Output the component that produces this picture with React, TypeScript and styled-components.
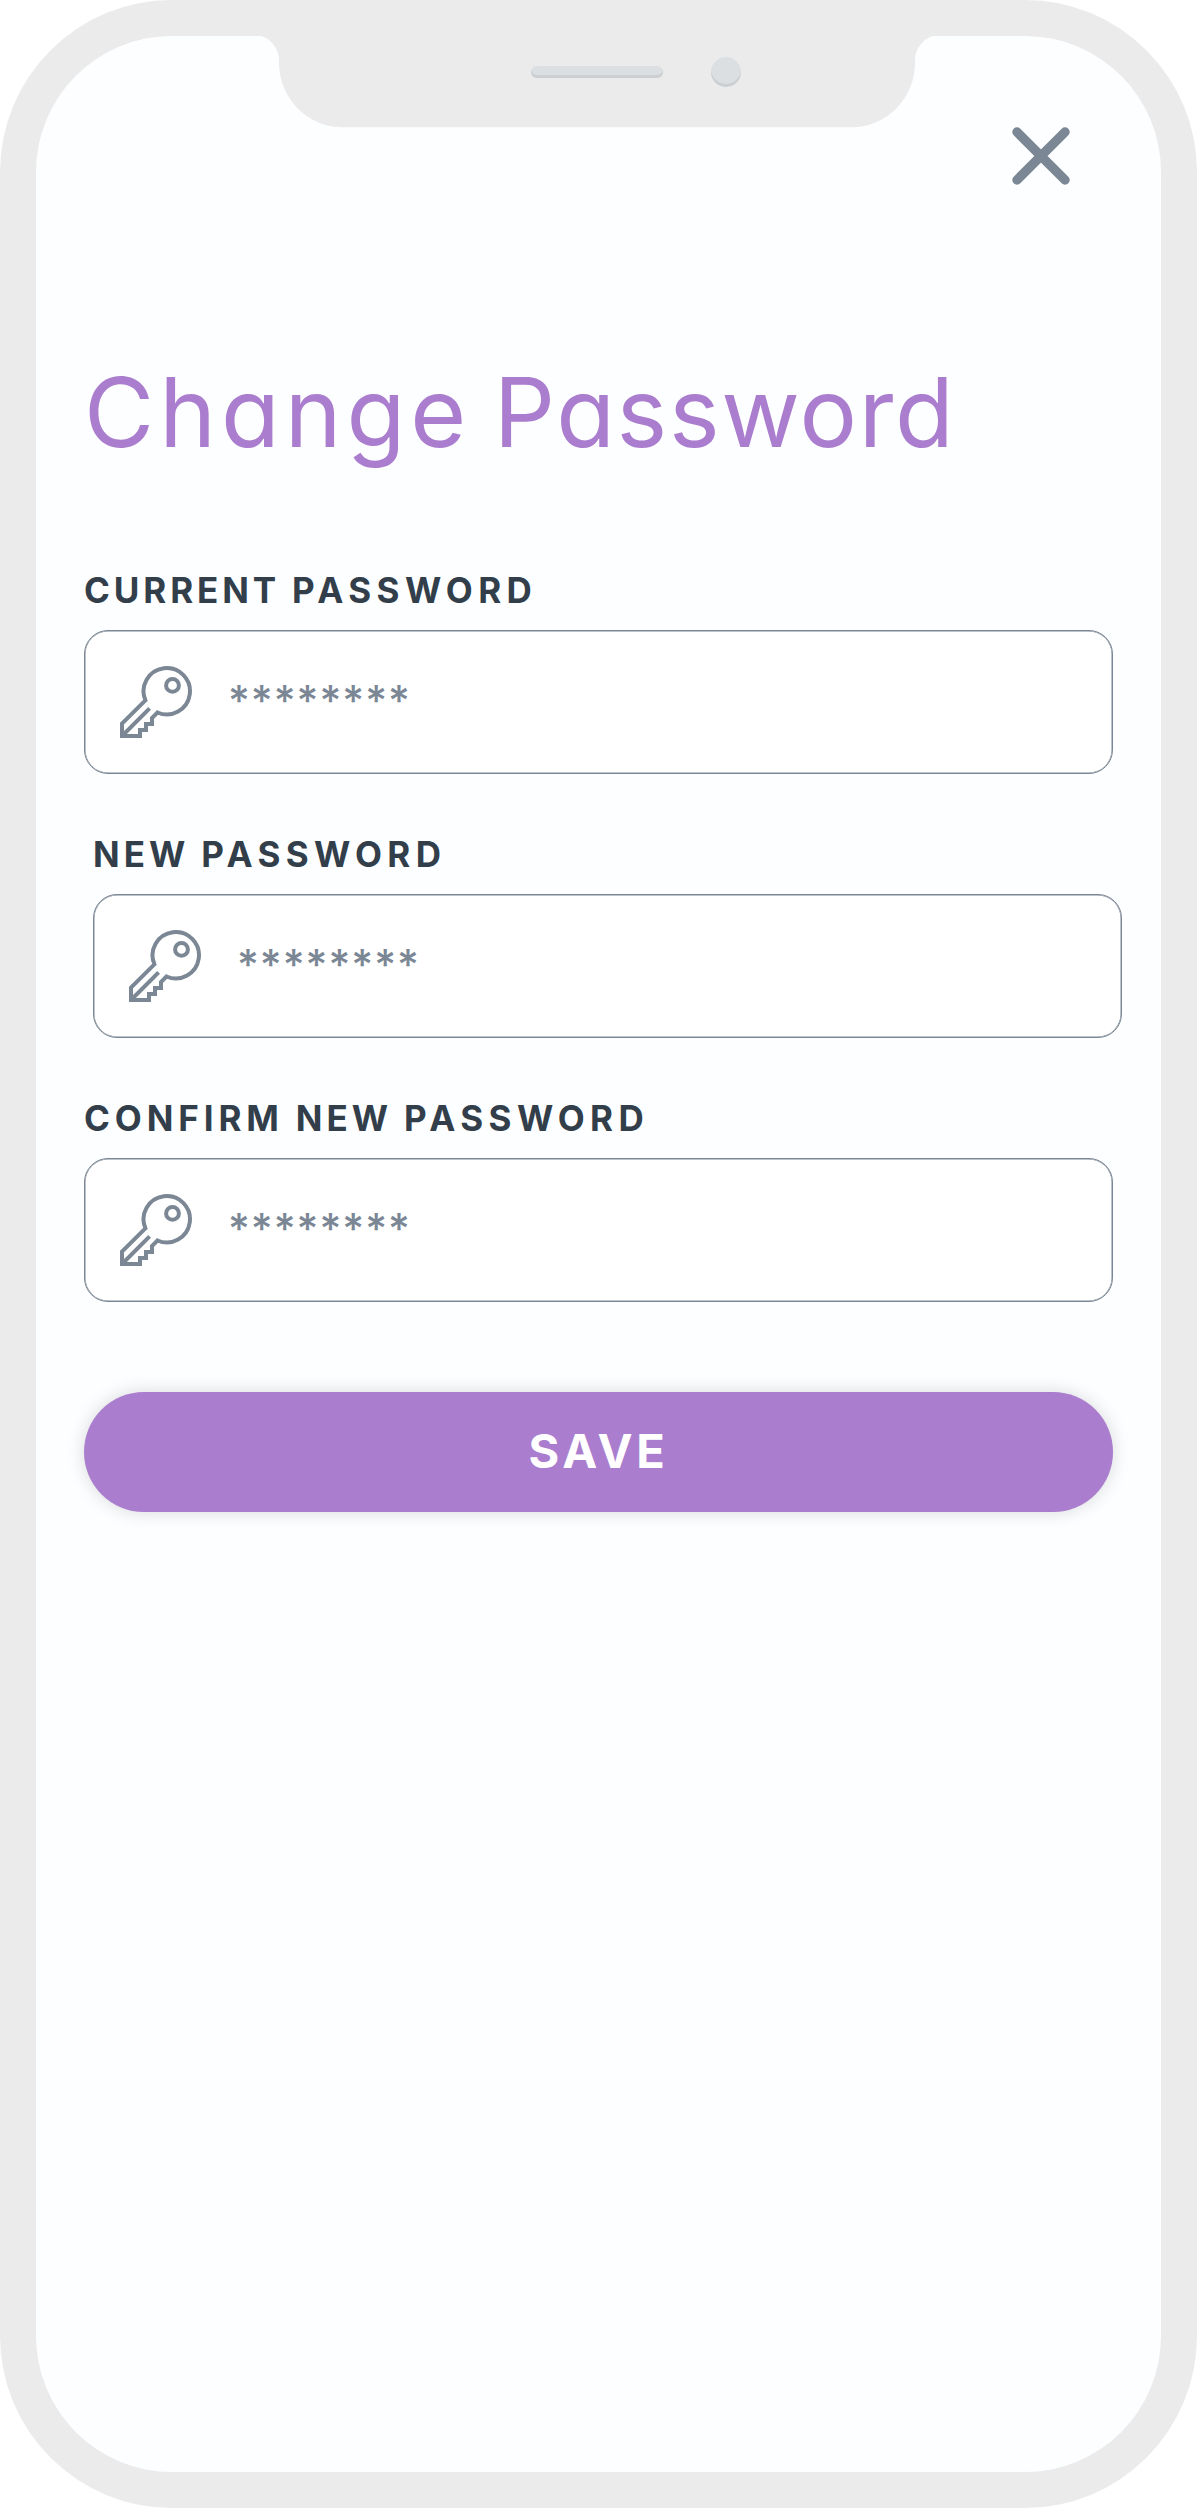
import React from "react";
import styled, { createGlobalStyle } from "styled-components";

const colors = {
  frame: "#ebebeb",
  screen: "#fdfeff",
  accent: "#aa7dce",
  ink: "#323f4b",
  muted: "#7b8794",
};

const GlobalStyle = createGlobalStyle`
  *, *::before, *::after { box-sizing: border-box; }
  body { margin: 0; background: #ffffff; font-family: Inter, sans-serif; }
  button { font: inherit; border: 0; padding: 0; background: none; cursor: pointer; }
`;

const Phone = styled.main`
  position: relative;
  width: 1197px;
  height: 2508px;
  padding: 36px;
  border-radius: 172px;
  background: ${colors.frame};
`;

const Screen = styled.div`
  display: flex;
  flex-direction: column;
  height: 100%;
  padding: 0 48px;
  border-radius: 136px;
  background: ${colors.screen};
`;

const Notch = styled.div`
  position: absolute;
  top: 35px;
  left: 260px;
  width: 674px;
  height: 93px;
`;

const NotchShape = styled.svg`
  display: block;
`;

const Speaker = styled.span`
  position: absolute;
  top: 31px;
  left: 271px;
  width: 132px;
  height: 12px;
  border-radius: 6px;
  background: #dbdfe2;
  box-shadow: inset 0 -3px 0 #cbcfd2;
`;

const Camera = styled.span`
  position: absolute;
  top: 22px;
  left: 451px;
  width: 30px;
  height: 30px;
  border-radius: 50%;
  background: #dbdfe2;
  box-shadow: inset 0 -3px 0 #cbcfd2;
`;

const Header = styled.header`
  display: flex;
  justify-content: flex-end;
  align-items: flex-start;
  height: 316px;
  padding: 91px 43px 0 0;
`;

const CloseButton = styled.button`
  display: block;
  width: 58px;
  height: 58px;
  color: ${colors.muted};

  svg { display: block; }
`;

const Title = styled.h1`
  margin: 0 0 97px;
  font-size: 96px;
  font-weight: 430;
  line-height: 120px;
  letter-spacing: -4.4px;
  font-feature-settings: "cv11";
  font-optical-sizing: none;
  white-space: nowrap;
  color: ${colors.accent};
`;

const Word = styled.span<{ $tracking: number }>`
  letter-spacing: ${(p) => p.$tracking}px;
`;

const Form = styled.form`
  display: flex;
  flex-direction: column;
`;

const Fields = styled.div`
  display: flex;
  flex-direction: column;
  gap: 59px;
  margin-bottom: 90px;
`;

const FieldGroup = styled.div<{ $shift: number }>`
  display: flex;
  flex-direction: column;
  gap: 19px;
  margin: 0 ${(p) => -p.$shift}px 0 ${(p) => p.$shift}px;
`;

const Label = styled.label`
  font-size: 35px;
  font-weight: 700;
  line-height: 42px;
  letter-spacing: 3.7px;
  white-space: nowrap;
  color: ${colors.ink};
`;

const InputBox = styled.div`
  display: flex;
  align-items: center;
  gap: 36px;
  height: 144px;
  padding: 0 35px;
  border: 1px solid ${colors.muted};
  border-radius: 24px;
  background: #ffffff;
  box-shadow: inset 0 0 0 0.5px ${colors.muted};
`;

const Placeholder = styled.span`
  padding-bottom: 3px;
  font-size: 42px;
  font-weight: 500;
  line-height: 50px;
  letter-spacing: 1px;
  color: ${colors.muted};
`;

const SaveButton = styled.button`
  && {
    height: 120px;
    padding-bottom: 4px;
    border-radius: 60px;
    background: ${colors.accent};
    box-shadow: 0 0 18px rgba(0, 0, 0, 0.15);
    font-size: 47px;
    font-weight: 700;
    letter-spacing: 3.7px;
    color: #ffffff;
  }
`;

function CloseIcon() {
  return (
    <svg width="58" height="58" viewBox="0 0 58 58" fill="none" stroke="currentColor" strokeWidth="9.4" strokeLinecap="round">
      <path d="M5 5L53 53M53 5L5 53" />
    </svg>
  );
}

function KeyIcon() {
  return (
    <svg width="72" height="72" viewBox="0 0 72 72" fill="none" stroke={colors.muted} strokeWidth="4">
      <path d="M25.4 34.3A23.2 23.2 0 1 1 37.5 46.5L32 52V58H26V64H20V70H2V57.5Z" />
      <path d="M2.5 69.5L29.6 42.4" />
      <circle cx="52.5" cy="19.4" r="6.4" />
    </svg>
  );
}

type TrackedWord = [text: string, tracking: number];

function Words({ words }: { words: TrackedWord[] }) {
  return (
    <>
      {words.map(([text, tracking], i) => (
        <React.Fragment key={text}>
          {i > 0 && " "}
          <Word $tracking={tracking}>{text}</Word>
        </React.Fragment>
      ))}
    </>
  );
}

const fields: { id: string; words: TrackedWord[]; shift: number }[] = [
  { id: "current", words: [["CURRENT", 3.9], ["PASSWORD", 5.4]], shift: 0 },
  { id: "new", words: [["NEW", 4], ["PASSWORD", 5.4]], shift: 9 },
  { id: "confirm", words: [["CONFIRM", 4.9], ["NEW", 4], ["PASSWORD", 5.4]], shift: 0 },
];

export default function App() {
  return (
    <>
      <GlobalStyle />
      <Phone>
        <Screen>
          <Header>
            <CloseButton aria-label="Close">
              <CloseIcon />
            </CloseButton>
          </Header>
          <Title>
            <Words words={[["Change", 5], ["Password", 1.6]]} />
          </Title>
          <Form>
            <Fields>
              {fields.map((field) => (
                <FieldGroup key={field.id} $shift={field.shift}>
                  <Label>
                    <Words words={field.words} />
                  </Label>
                  <InputBox>
                    <KeyIcon />
                    <Placeholder>********</Placeholder>
                  </InputBox>
                </FieldGroup>
              ))}
            </Fields>
            <SaveButton type="button">SAVE</SaveButton>
          </Form>
        </Screen>
        <Notch>
          <NotchShape width="674" height="93" viewBox="260 35 674 93" fill={colors.frame}>
            <path d="M260 35V35.8A25 25 0 0 1 279 60V63A64 64.3 0 0 0 343 127.3H851A64 64.3 0 0 0 915 63V60A25 25 0 0 1 934 35.8V35Z" />
          </NotchShape>
          <Speaker />
          <Camera />
        </Notch>
      </Phone>
    </>
  );
}
